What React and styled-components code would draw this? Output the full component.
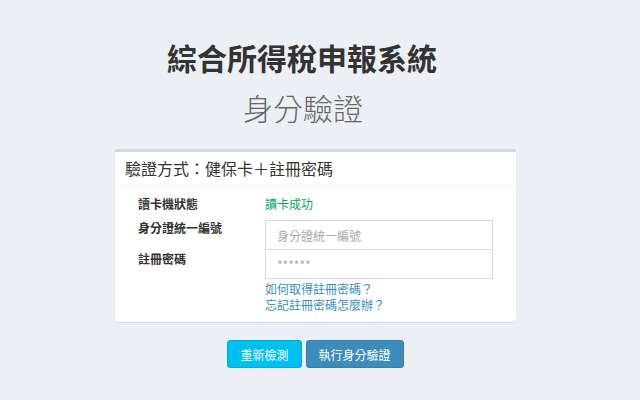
import React from 'react';
import styled, { createGlobalStyle } from 'styled-components';

const GlobalStyle = createGlobalStyle`
  body {
    margin: 0;
    background: #ecf0f5;
    font-family: "Noto Sans CJK TC", "Noto Sans", "Liberation Sans", sans-serif;
    color: #333;
  }
`;

const Page = styled.div`
  width: 401px;
  margin-left: 115px;
  padding-top: 38px;
`;

const Title = styled.h1`
  margin: 0 27px 0 0;
  font-size: 30px;
  line-height: 38px;
  font-weight: 700;
  text-align: center;
  color: #333;
`;

const SubTitle = styled.h2`
  margin: 12px 25px 0 0;
  font-size: 30px;
  line-height: 38px;
  font-weight: 200;
  text-align: center;
  color: #666;
`;

const Box = styled.div`
  margin-top: 23px;
  background: #fff;
  border-top: 3px solid #d2d6de;
  border-radius: 3px;
  box-shadow: 0 1px 1px rgba(0, 0, 0, 0.1);
`;

const BoxHeader = styled.div`
  padding: 6px 10px 7px;
  border-bottom: 1px solid #f4f4f4;
  font-size: 16px;
  line-height: 20px;
`;

const BoxBody = styled.div`
  padding: 8px 23px 9px;
`;

const Row = styled.div`
  display: grid;
  grid-template-columns: 127px 228px;
  align-items: start;
  margin-top: ${p => p.$gap || 0}px;
`;

const Label = styled.div`
  font-size: 12px;
  font-weight: 700;
  line-height: ${p => p.$lh || 18}px;
  color: #333;
`;

const Status = styled.div`
  font-size: 12px;
  line-height: 20px;
  color: #00a65a;
`;

const Field = styled.input`
  display: block;
  box-sizing: border-box;
  width: 228px;
  height: 30px;
  margin-top: ${p => p.$overlap ? -1 : 0}px;
  padding: 0 11px;
  border: 1px solid #d2d6de;
  font-family: inherit;
  font-size: 12px;
  color: #555;
  outline: none;
  &::placeholder {
    color: #aaa;
  }
`;

const Links = styled.div`
  display: flex;
  flex-direction: column;
  padding-top: 2px;
`;

const Link = styled.a`
  font-size: 12px;
  line-height: 16px;
  color: #3c8dbc;
  text-decoration: none;
`;

const Actions = styled.div`
  display: flex;
  justify-content: center;
  gap: 4px;
  margin-top: 18px;
`;

const Button = styled.button`
  height: 28px;
  padding: 0 12px;
  border: 1px solid ${p => p.$border};
  border-radius: 3px;
  background: ${p => p.$bg};
  color: #fff;
  font-family: inherit;
  font-size: 12px;
  cursor: pointer;
`;

export default function App() {
  return (
    <>
      <GlobalStyle />
      <Page>
        <Title>綜合所得稅申報系統</Title>
        <SubTitle>身分驗證</SubTitle>
        <Box>
          <BoxHeader>驗證方式：健保卡＋註冊密碼</BoxHeader>
          <BoxBody>
            <Row>
              <Label $lh={20}>讀卡機狀態</Label>
              <Status>讀卡成功</Status>
            </Row>
            <Row $gap={6}>
              <Label $lh={16}>身分證統一編號</Label>
              <Field placeholder="身分證統一編號" />
            </Row>
            <Row>
              <Label>註冊密碼</Label>
              <div>
                <Field $overlap type="password" placeholder="******" />
                <Links>
                  <Link href="#">如何取得註冊密碼？</Link>
                  <Link href="#">忘記註冊密碼怎麼辦？</Link>
                </Links>
              </div>
            </Row>
          </BoxBody>
        </Box>
        <Actions>
          <Button $bg="#00c0ef" $border="#00acd6">重新檢測</Button>
          <Button $bg="#3c8dbc" $border="#367fa9">執行身分驗證</Button>
        </Actions>
      </Page>
    </>
  );
}
